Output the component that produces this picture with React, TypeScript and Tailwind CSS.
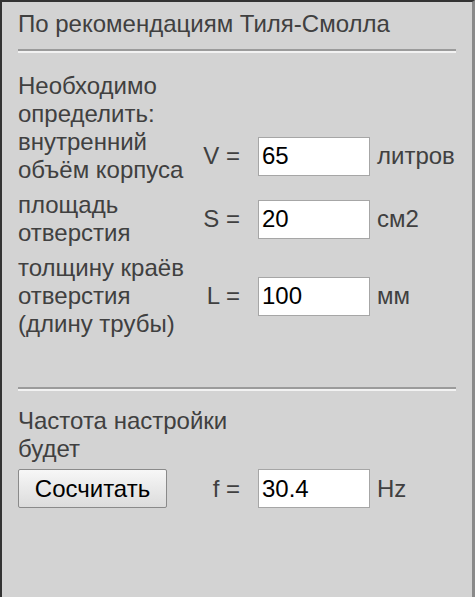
import React from "react";

function Field({ value }: { value: string }) {
  return (
    <input
      value={value}
      readOnly
      className="h-[39px] w-[112px] border border-[#a6a6a6] bg-white px-[3px] text-[24px] text-black outline-none"
    />
  );
}

const rows: { label: string[]; sign: string; value: string; unit: string }[] = [
  { label: ["внутренний", "объём корпуса"], sign: "V =", value: "65", unit: "литров" },
  { label: ["площадь", "отверстия"], sign: "S =", value: "20", unit: "см2" },
  { label: ["толщину краёв", "отверстия", "(длину трубы)"], sign: "L =", value: "100", unit: "мм" },
];

export default function App() {
  return (
    <div className="h-[597px] w-[475px] overflow-hidden border-l-2 border-t-2 border-r-[3px] border-l-[#333333] border-t-[#333333] border-r-[#8a8a8a] bg-[#d3d3d3] px-4 pt-[8px] font-['Liberation_Sans',Arial,sans-serif] text-[24px] leading-[28px] text-[#404040]">
      <div>По рекомендациям Тиля-Смолла</div>
      <div className="mt-[11px] h-0 border-t-2 border-b-2 border-t-[#9b9b9b] border-b-[#f2f2f2]" />
      <div className="mt-[19px] w-[180px]">Необходимо определить:</div>
      <div className="grid grid-cols-[180px_42px_130px_auto] gap-y-[7px]">
        {rows.map((r) => (
          <React.Fragment key={r.sign}>
            <div>
              {r.label.map((l) => (
                <div key={l}>{l}</div>
              ))}
            </div>
            <div className="flex items-center justify-end">{r.sign}</div>
            <div className="flex items-center pl-[18px]">
              <Field value={r.value} />
            </div>
            <div className="flex items-center pl-[7px]">{r.unit}</div>
          </React.Fragment>
        ))}
      </div>
      <div className="mt-[49px] h-0 border-t-2 border-b-2 border-t-[#9b9b9b] border-b-[#f2f2f2]" />
      <div className="mt-[16px] w-[222px]">Частота настройки будет</div>
      <div className="mt-[6px] grid grid-cols-[180px_42px_130px_auto]">
        <div className="flex items-center">
          <button className="h-[39px] w-[149px] rounded-[2px] border border-[#8a8a8a] bg-linear-to-b from-[#f7f7f7] to-[#dcdcdc] text-[24px] text-black">
            Сосчитать
          </button>
        </div>
        <div className="flex items-center justify-end">f =</div>
        <div className="flex items-center pl-[18px]">
          <Field value="30.4" />
        </div>
        <div className="flex items-center pl-[7px]">Hz</div>
      </div>
    </div>
  );
}
